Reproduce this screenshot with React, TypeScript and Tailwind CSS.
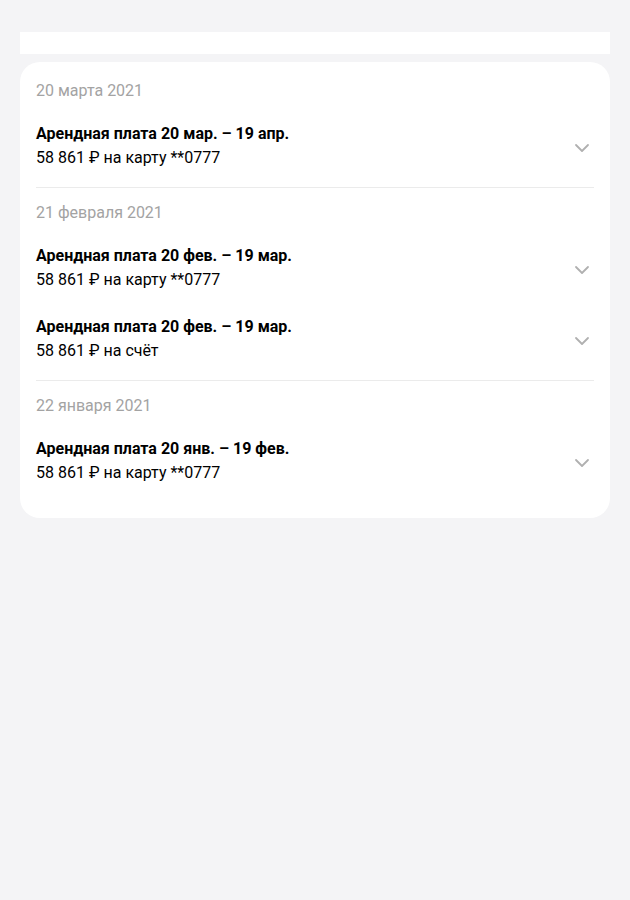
import { ChevronDown } from 'lucide-react'

type Payment = {
  title: string
  amount: string
}

type Group = {
  date: string
  items: Payment[]
}

const groups: Group[] = [
  {
    date: '20 марта 2021',
    items: [{ title: 'Арендная плата 20 мар. – 19 апр.', amount: '58 861 ₽ на карту **0777' }],
  },
  {
    date: '21 февраля 2021',
    items: [
      { title: 'Арендная плата 20 фев. – 19 мар.', amount: '58 861 ₽ на карту **0777' },
      { title: 'Арендная плата 20 фев. – 19 мар.', amount: '58 861 ₽ на счёт' },
    ],
  },
  {
    date: '22 января 2021',
    items: [{ title: 'Арендная плата 20 янв. – 19 фев.', amount: '58 861 ₽ на карту **0777' }],
  },
]

function PaymentRow({ payment }: { payment: Payment }) {
  return (
    <div className="flex items-center justify-between">
      <div className="flex flex-col">
        <span className="text-[16px] leading-6 font-bold text-black">{payment.title}</span>
        <span className="text-[16px] leading-6 text-black">{payment.amount}</span>
      </div>
      <ChevronDown className="mt-[3px] h-6 w-6 text-[#b0b0b0]" strokeWidth={1.8} />
    </div>
  )
}

export default function App() {
  return (
    <div
      className="min-h-[900px] bg-[#f4f4f6] px-5 pt-8"
      style={{ fontFamily: 'Roboto, "Noto Sans", sans-serif' }}
    >
      <div className="h-[22px] bg-white" />

      <div className="mt-2 rounded-[20px] bg-white px-4 pt-4 pb-4">
        {groups.map((group, i) => (
          <div
            key={group.date}
            className={
              i === 0 ? 'pt-px pb-[17px]' : 'border-t border-[#ebebeb] pt-[13px] pb-[17px]'
            }
          >
            <div className="text-[16px] leading-6 text-[#a3a3a3]">{group.date}</div>
            <div className="mt-[19px] flex flex-col gap-[23px]">
              {group.items.map((p, j) => (
                <PaymentRow key={j} payment={p} />
              ))}
            </div>
          </div>
        ))}
      </div>
    </div>
  )
}
